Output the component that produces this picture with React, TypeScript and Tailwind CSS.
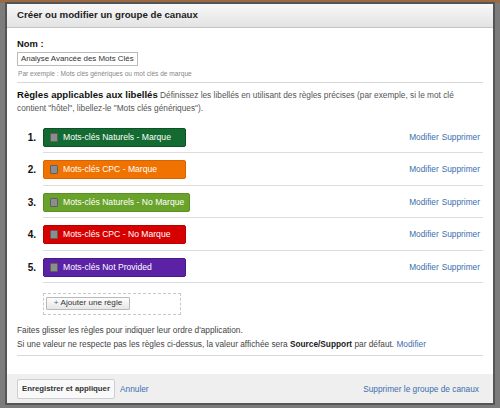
import React from 'react';

const rules = [
  { label: 'Mots-clés Naturels - Marque', color: 'bg-[#136b32] border-[#0c5226]' },
  { label: 'Mots-clés CPC - Marque', color: 'bg-[#f07200] border-[#d86400]' },
  { label: 'Mots-clés Naturels - No Marque', color: 'bg-[#6aa32b] border-[#5a8f22]' },
  { label: 'Mots-clés CPC - No Marque', color: 'bg-[#d70000] border-[#b80000]' },
  { label: 'Mots-clés Not Provided', color: 'bg-[#5b22a6] border-[#4a1a8c]' },
];

const RuleRow: React.FC<{ n: number; label: string; color: string }> = ({ n, label, color }) => (
  <div className="flex">
    <div className="w-[26px] pr-[7px] pt-[7px] h-[26px] flex items-center justify-end text-[10px] font-bold text-[#111]">
      {n}.
    </div>
    <div className="flex-1 flex items-start justify-between pt-[7px] pb-[5.5px] border-b border-[#dcdcdc]">
      <div className={`h-[19px] min-w-[143px] flex items-center gap-[5px] pl-[6px] pr-[5px] rounded-[2px] border ${color}`}>
        <span className="w-[8px] h-[9px] bg-[#8d8d8d] border border-[#5f5f5f] rounded-[1px]" />
        <span className="text-white text-[8.6px] leading-none whitespace-nowrap">{label}</span>
      </div>
      <div className="h-[19px] flex items-center gap-[3px] pr-[3px] text-[8.3px] text-[#3b6eae]">
        <span>Modifier</span>
        <span>Supprimer</span>
      </div>
    </div>
  </div>
);

export default function App() {
  return (
    <div
      className="w-[500px] h-[408px] overflow-hidden bg-[#7c7c7c] relative"
      style={{ fontFamily: '"Liberation Sans", Arial, sans-serif' }}
    >
      <div className="absolute top-0 left-0 right-0 h-[3px] bg-[#9a6a45]" />
      <div className="absolute left-[5px] top-[2px] w-[490px] h-[403px] border-2 border-[#555] bg-white flex flex-col">
        <div className="h-[24px] shrink-0 flex items-center pl-[10px] bg-gradient-to-b from-[#f8f8f8] to-[#e3e3e3] border-b border-[#c4c4c4]">
          <span className="text-[9.7px] font-bold text-[#222]">Créer ou modifier un groupe de canaux</span>
        </div>

        <div className="flex-1 px-[10px] pt-[10px] text-[#444]">
          <div className="text-[9.4px] font-bold leading-[12px] text-[#111]">Nom :</div>
          <div className="mt-[2px] w-[121px] h-[14px] border border-[#bbb] flex items-center pl-[3px] text-[7.9px] text-[#333] whitespace-nowrap overflow-hidden">
            Analyse Avancée des Mots Clés
          </div>
          <div className="mt-[3px] leading-[10px] text-[6.6px] text-[#888] pl-[1px]">
            Par exemple : Mots clés génériques ou mot clés de marque
          </div>
          <div className="mt-[3px] border-t border-[#d8d8d8]" />

          <p className="mt-[5px] pr-[8px] text-[8.3px] leading-[13px] text-[#555]">
            <span className="font-bold text-[9.6px] leading-[13px] text-[#111]">Règles applicables aux libellés</span> Définissez les libellés en utilisant des règles précises (par exemple, si le mot clé contient "hôtel", libellez-le "Mots clés génériques").
          </p>

          <div className="mt-[5.5px]">
            {rules.map((r, i) => (
              <RuleRow key={r.label} n={i + 1} label={r.label} color={r.color} />
            ))}
          </div>

          <div className="mt-[10px] ml-[26px] w-[138px] h-[22px] border border-dashed border-[#c8c8c8] pt-[3px] pl-[2px]">
            <div className="w-[84px] h-[13px] border border-[#b9b9b9] rounded-[1px] bg-gradient-to-b from-[#fdfdfd] to-[#e6e6e6] flex items-center justify-center text-[8.1px] text-[#333]">
              <span className="text-[#3b5f9a] mr-[2px]">+</span>Ajouter une règle
            </div>
          </div>

          <div className="mt-[9px] text-[8.3px] leading-[13.5px] text-[#444]">
            <div>Faites glisser les règles pour indiquer leur ordre d'application.</div>
            <div>
              Si une valeur ne respecte pas les règles ci-dessus, la valeur affichée sera{' '}
              <span className="font-bold text-[#222]">Source/Support</span> par défaut.{' '}
              <span className="text-[#3b6eae]">Modifier</span>
            </div>
          </div>
          <div className="mt-[4px] border-t border-[#d8d8d8]" />
        </div>

        <div className="h-[29px] shrink-0 bg-[#efefef] flex items-start justify-between pl-[10px] pr-[14px] pt-[5px]">
          <div className="flex items-center gap-[5px]">
            <div className="h-[20px] w-[98px] border border-[#cfcfcf] rounded-[2px] bg-[#f9f9f9] flex items-center justify-center text-[7.8px] font-bold text-[#333]">
              Enregistrer et appliquer
            </div>
            <span className="text-[8.3px] text-[#3b6eae]">Annuler</span>
          </div>
          <div className="h-[20px] flex items-center text-[8.3px] text-[#3b6eae]">Supprimer le groupe de canaux</div>
        </div>
      </div>
    </div>
  );
}
